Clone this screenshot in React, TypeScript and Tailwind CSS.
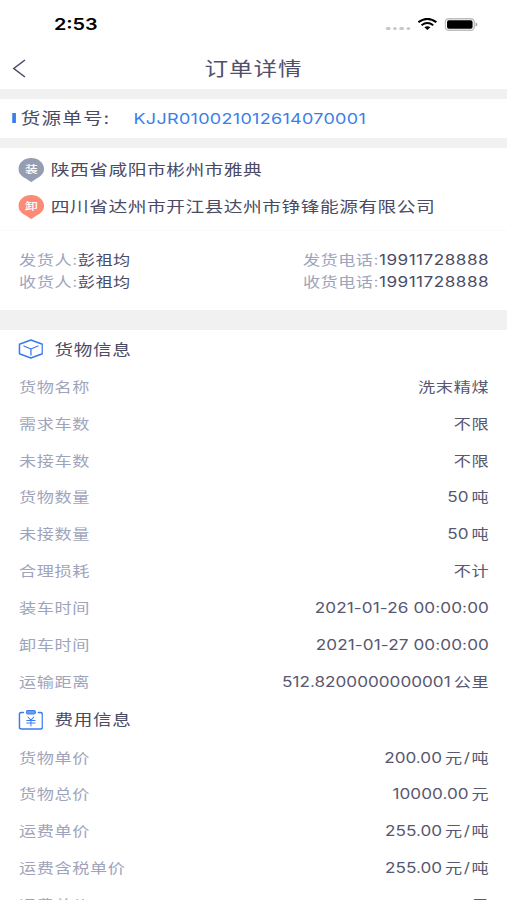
import type { ReactNode } from "react";

const cargo: [string, string, string][] = [
  ["货物名称", "", "洗末精煤"],
  ["需求车数", "", "不限"],
  ["未接车数", "", "不限"],
  ["货物数量", "50", "吨"],
  ["未接数量", "50", "吨"],
  ["合理损耗", "", "不计"],
  ["装车时间", "2021-01-26 00:00:00", ""],
  ["卸车时间", "2021-01-27 00:00:00", ""],
  ["运输距离", "512.8200000000001", "公里"],
];

const fees: [string, string, string][] = [
  ["货物单价", "200.00", "元/吨"],
  ["货物总价", "10000.00", "元"],
  ["运费单价", "255.00", "元/吨"],
  ["运费含税单价", "255.00", "元/吨"],
  ["运费总价", "", "元"],
];

function Unit({ text }: { text: string }) {
  const [first, second] = text.split("/");
  return (
    <span className="-mr-[0.5px] ml-[2.5px] tracking-[0.6px]">
      {first}
      {second && <span className="mx-[0.7px]">/</span>}
      {second}
    </span>
  );
}

function Row({ row }: { row: [string, string, string] }) {
  const [label, num, unit] = row;
  return (
    <div className="flex h-[36.9px] shrink-0 items-center justify-between whitespace-nowrap pl-[15.5px] pr-[14.8px] pt-[0.6px] text-[14px] leading-5">
      <span className="tracking-[0.5px] text-[#a0a4bb]">{label}</span>
      <span className="flex items-center text-[#585870]">
        {num && <span className={unit ? "" : "-mr-[0.1px] tracking-[0.08px]"}>{num}</span>}
        {unit && <Unit text={unit} />}
      </span>
    </div>
  );
}

function Heading({ icon, children }: { icon: ReactNode; children: ReactNode }) {
  return (
    <div className="flex h-[38px] shrink-0 items-center pl-[14.5px] text-[15.2px] tracking-[0.5px] text-[#4b4b64]">
      {icon}
      <span className="ml-[9.5px] mt-[2px]">{children}</span>
    </div>
  );
}

function Pin({ color, children }: { color: string; children: ReactNode }) {
  return (
    <div className="relative -ml-[0.3px] mr-[0.3px] h-6 w-[21px] shrink-0">
      <svg className="block h-6 w-[21px]" viewBox="0 0 26 24" preserveAspectRatio="none">
        <path d="M13 0C20 0 26 4.8 26 11C26 16 21.5 19 18 20.8L14 23.6Q13 24.2 12 23.6L8 20.8C4.500 19 0 16 0 11C0 4.800 6 0 13 0Z" fill={color} />
      </svg>
      <span className="absolute inset-x-0 top-[4.5px] text-center text-[10.5px] font-medium leading-[14px] tracking-normal text-white">
        {children}
      </span>
    </div>
  );
}

function Contact({ role, phone }: { role: string; phone: string }) {
  return (
    <div className="flex h-[22.5px] items-center justify-between whitespace-nowrap pl-[15.5px] pr-[15px] text-[14px] leading-5 text-[#4b4b66]">
      <span className="flex">
        <span className="tracking-[0.5px] text-[#a0a4bb]">{role}:</span>
        <span className="tracking-[0.4px]">彭祖均</span>
      </span>
      <span className="flex">
        <span className="tracking-[0.4px] text-[#a0a4bb]">{phone}:</span>
        <span className="-mr-[0.4px] tracking-[0.4px]">19911728888</span>
      </span>
    </div>
  );
}

export default function App() {
  return (
    <div className="h-[900px] w-[507px] overflow-hidden bg-white">
      <div className="flex h-[900px] w-[414px] origin-top-left scale-x-[1.2246] flex-col overflow-hidden bg-white font-['Inter','Noto_Sans_CJK_SC',sans-serif]">
        <div className="flex h-[48px] shrink-0 items-center justify-between pl-[44px] pr-[24px]">
          <span className="text-[16.2px] font-semibold leading-5 text-black">2:53</span>
          <div className="flex items-center">
            <div className="mr-[6px] mt-[9px] flex gap-[2.4px]">
              {[0, 1, 2, 3].map((i) => (
                <i key={i} className="block h-[3.5px] w-[3.1px] rounded-full bg-[#c8c8c8]" />
              ))}
            </div>
            <svg className="h-[12px] w-[16px]" viewBox="0 0 20 12" preserveAspectRatio="none" fill="none" stroke="#000">
              <path d="M.8 4.200Q10-2.400 19.200 4.200" strokeWidth="2.1" />
              <path d="M4 7.200Q10 3 16 7.200" strokeWidth="2" />
              <path d="M6.900 9.300Q10 7.200 13.100 9.300L10 12Z" fill="#000" stroke="none" />
            </svg>
            <svg className="ml-[6px] h-[13px] w-[27px]" viewBox="0 0 33 13" preserveAspectRatio="none">
              <rect x=".7" y=".7" width="29" height="11.600" rx="3.500" fill="#fff" stroke="#bdbdbd" strokeWidth="1.400" />
              <rect x="2.500" y="2.200" width="25.500" height="8.600" rx="1.800" fill="#000" />
              <path d="M31 4.500Q33 5 33 6.500Q33 8 31 8.500Z" fill="#aaa" />
            </svg>
          </div>
        </div>

        <div className="relative flex h-[40.5px] shrink-0 items-center justify-center">
          <svg className="absolute left-[10px] top-[11px] h-[19px] w-[11px]" viewBox="0 0 13 19" preserveAspectRatio="none" fill="none" stroke="#4b4b66" strokeWidth="1.500">
            <path d="M12.300 1L1.500 9.500L12.300 18" />
          </svg>
          <span className="mt-[2px] text-[19.3px] leading-7 tracking-[0.7px] text-[#50506c]">订单详情</span>
        </div>

        <div className="h-[10px] shrink-0 bg-[#f1f1f1]" />
        <div className="flex h-[39.5px] shrink-0 items-center whitespace-nowrap pl-[10px]">
          <i className="block h-[10px] w-[2.5px] bg-[#3a7cf0]" />
          <span className="ml-[4.5px] w-[92px] text-[16px] tracking-[0.9px] text-[#4b4b64]">货源单号:</span>
          <span className="mt-[2px] text-[14.7px] tracking-[0.25px] text-[#3a7fe8]">KJJR010021012614070001</span>
        </div>
        <div className="h-[10px] shrink-0 bg-[#f1f1f1]" />

        <div className="flex h-[83px] shrink-0 flex-col whitespace-nowrap border-b border-[#fafafa] pl-[15.5px] pt-[3.5px] text-[15.3px] tracking-[0.4px] text-[#4b4b64]">
          <div className="flex h-[37px] items-center gap-[5px]">
            <Pin color="#959db3">装</Pin>
            <span className="mt-px">陕西省咸阳市彬州市雅典</span>
          </div>
          <div className="flex h-[37px] items-center gap-[5px]">
            <Pin color="#fb8b76">卸</Pin>
            <span className="mt-px">四川省达州市开江县达州市铮锋能源有限公司</span>
          </div>
        </div>
        <div className="h-[79px] shrink-0 pt-[17.5px]">
          <Contact role="发货人" phone="发货电话" />
          <Contact role="收货人" phone="收货电话" />
        </div>
        <div className="h-[20px] shrink-0 bg-[#f1f1f1]" />

        <Heading
          icon={
            <svg className="h-5 w-[20.5px]" viewBox="0 0 25 20" preserveAspectRatio="none" fill="none" stroke="#3a7cf0" strokeWidth="1.700" strokeLinejoin="round">
              <path d="M12.500 1L24 5.200V14.800L12.500 19L1 14.800V5.200Z" />
              <path d="M5.500 7L12.500 10L19.500 7M12.500 10V16" strokeWidth="1.300" strokeLinecap="round" />
            </svg>
          }
        >
          货物信息
        </Heading>
        {cargo.map((r) => (
          <Row key={r[0]} row={r} />
        ))}
        <div className="h-[0.8px] shrink-0" />
        <Heading
          icon={
            <svg className="h-5 w-[20.5px]" viewBox="0 0 25 20" preserveAspectRatio="none" fill="none" stroke="#3a7cf0" strokeWidth="1.600" strokeLinecap="round" strokeLinejoin="round">
              <path d="M5 2.500H3Q1 2.500 1 4.500V17Q1 19 3 19H22Q24 19 24 17V4.500Q24 2.500 22 2.500H20" />
              <rect x="8" y=".6" width="9" height="3.400" rx="1.400" fill="#6c9cf4" strokeWidth="1" />
              <path d="M9.500 7L12.500 10.200L15.500 7M8.300 10.500H16.700M8.300 13H16.700M12.500 10.500V16" strokeWidth="1" />
            </svg>
          }
        >
          费用信息
        </Heading>
        {fees.map((r) => (
          <Row key={r[0]} row={r} />
        ))}
      </div>
    </div>
  );
}
